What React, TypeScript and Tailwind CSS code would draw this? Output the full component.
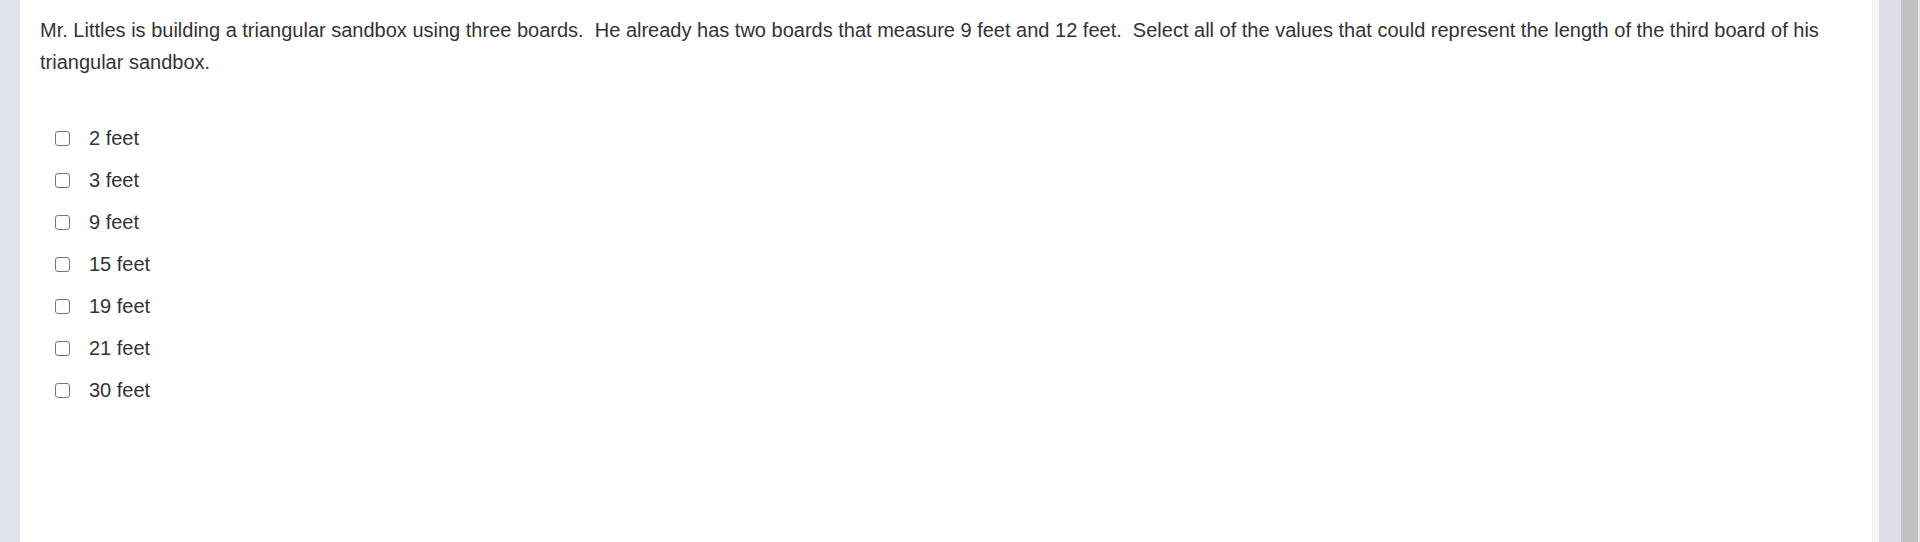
import React from 'react';

const options = ['2 feet', '3 feet', '9 feet', '15 feet', '19 feet', '21 feet', '30 feet'];

export default function App() {
    return (
        <div className="flex h-[542px] w-[1920px] overflow-hidden bg-[#e1e3eb] font-['Liberation_Sans',Arial,sans-serif] text-[#333333]">
            {/* left gutter */}
            <div className="w-[20px] shrink-0 bg-[#e1e3eb]" />

            {/* question panel */}
            <main className="flex-1 bg-white border-r border-[#eceef2] pl-[20px] pr-[40px] pt-[14px]">
                <p className="text-[20px] leading-[32px]">
                    Mr. Littles is building a triangular sandbox using three boards.&nbsp; He already has two boards that measure 9 feet and 12 feet.&nbsp; Select all of the values that could represent the length of the third board of his triangular sandbox.
                </p>

                <div className="mt-[39px] flex flex-col">
                    {options.map((opt) => (
                        <label key={opt} className="flex h-[42px] items-center">
                            <span className="ml-[15px] h-[15px] w-[15px] rounded-[3px] border border-[#767676] bg-white" />
                            <span className="ml-[19px] text-[20px] leading-none">{opt}</span>
                        </label>
                    ))}
                </div>
            </main>

            {/* right gutter + scrollbar */}
            <div className="w-[6px] shrink-0 bg-[#f6f7f9]" />
            <div className="w-[22px] shrink-0 bg-[#dcdfe8]" />
            <div className="w-[17px] shrink-0 bg-[#c1c1c1]" />
            <div className="w-[2px] shrink-0 bg-[#e6e6e6]" />
        </div>
    );
}
